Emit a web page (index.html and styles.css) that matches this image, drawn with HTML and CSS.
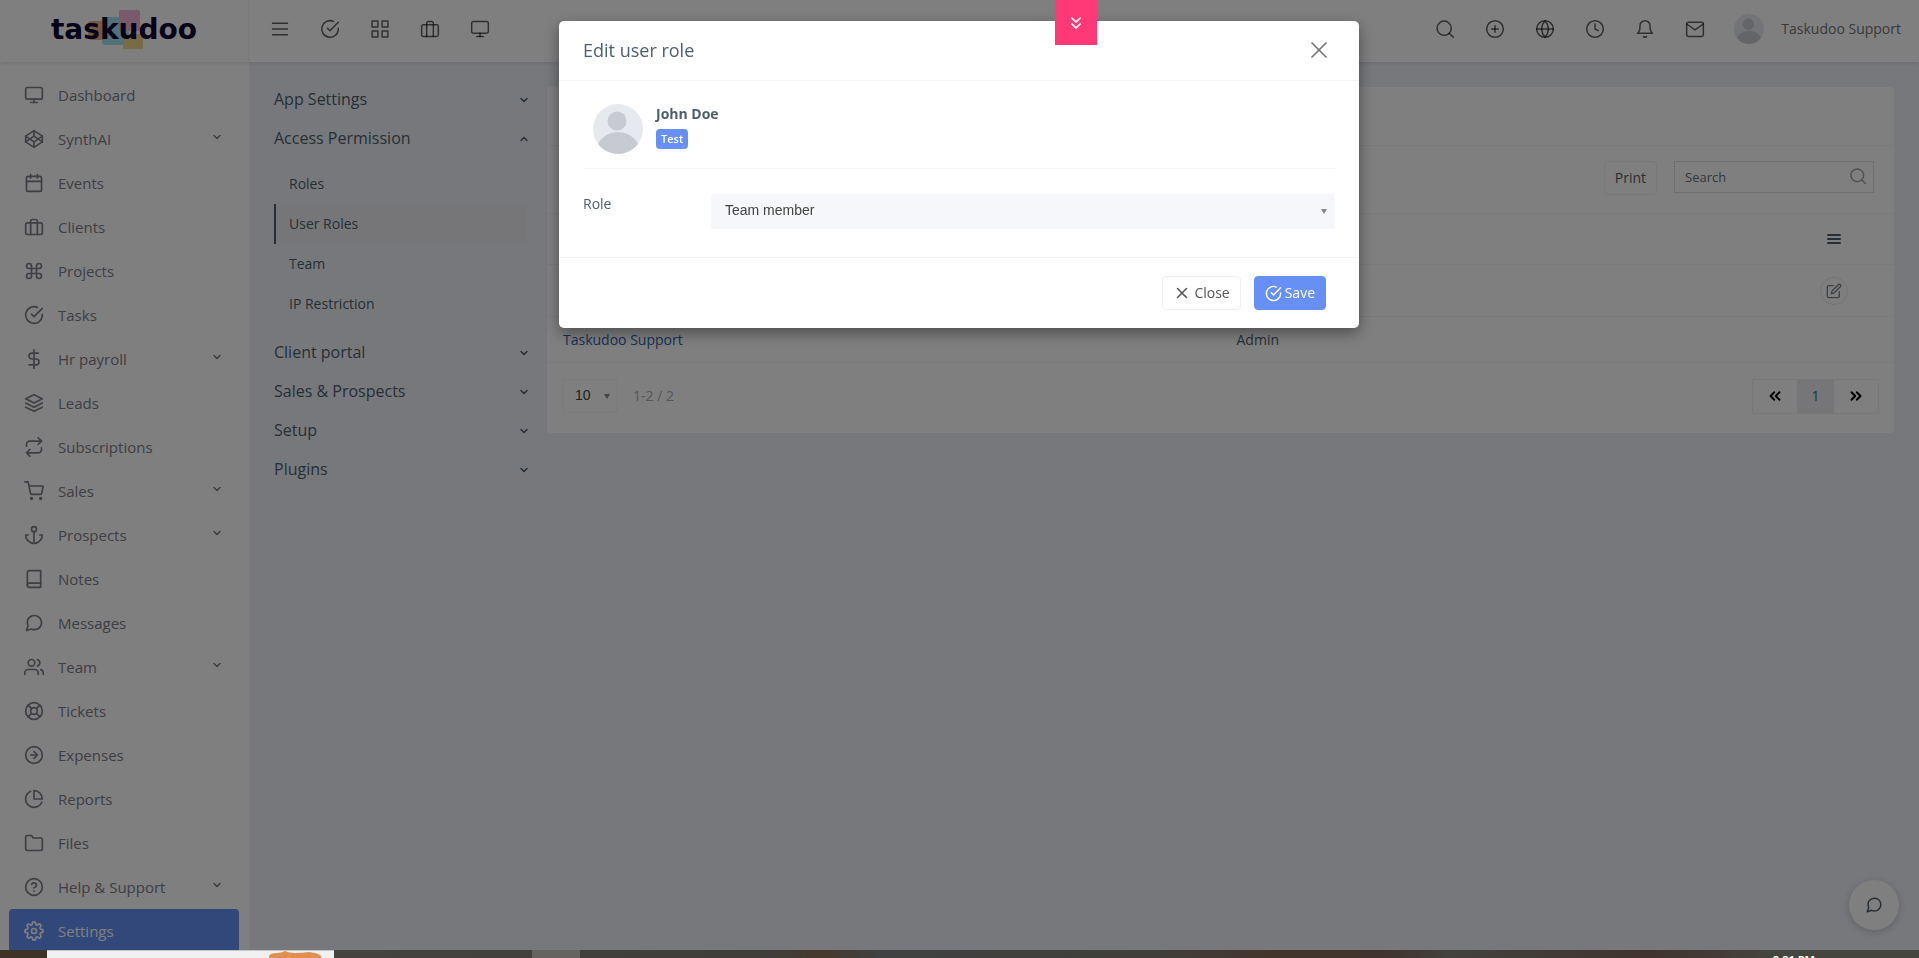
FILE: index.html
```html
<!DOCTYPE html>
<html lang="en">
<head>
    <meta charset="UTF-8">
    <meta name="viewport" content="width=device-width, initial-scale=1.0">
    <title>User roles | Taskudoo</title>
    <link rel="stylesheet" href="styles.css">
</head>
<body>

    <!-- icon set -->
    <svg class="icon-defs" aria-hidden="true">
        <symbol id="i-monitor" viewBox="0 0 24 24"><rect x="2" y="3" width="20" height="14" rx="2"/><path d="M8 21h8"/><path d="M12 17v4"/></symbol>
        <symbol id="i-codepen" viewBox="0 0 24 24"><path d="M12 2l10 6.500v7L12 22 2 15.500v-7z"/><path d="M12 22v-6.500"/><path d="M22 8.500l-10 7-10-7"/><path d="M2 15.500l10-7 10 7"/><path d="M12 2v6.500"/></symbol>
        <symbol id="i-calendar" viewBox="0 0 24 24"><rect x="3" y="4" width="18" height="18" rx="2"/><path d="M16 2v4"/><path d="M8 2v4"/><path d="M3 10h18"/></symbol>
        <symbol id="i-briefcase" viewBox="0 0 24 24"><rect x="2" y="7" width="20" height="14" rx="2"/><path d="M16 21V5a2 2 0 0 0-2-2h-4a2 2 0 0 0-2 2v16"/></symbol>
        <symbol id="i-command" viewBox="0 0 24 24"><path d="M18 3a3 3 0 0 0-3 3v12a3 3 0 1 0 3-3H6a3 3 0 1 0 3 3V6a3 3 0 1 0-3 3h12a3 3 0 0 0 0-6z"/></symbol>
        <symbol id="i-check-circle" viewBox="0 0 24 24"><path d="M22 11.080V12a10 10 0 1 1-5.930-9.140"/><path d="M22 4L12 14.010l-3-3"/></symbol>
        <symbol id="i-dollar" viewBox="0 0 24 24"><path d="M12 1v22"/><path d="M17 5H9.500a3.500 3.500 0 0 0 0 7h5a3.500 3.500 0 0 1 0 7H6"/></symbol>
        <symbol id="i-layers" viewBox="0 0 24 24"><path d="M12 2L2 7l10 5 10-5z"/><path d="M2 17l10 5 10-5"/><path d="M2 12l10 5 10-5"/></symbol>
        <symbol id="i-repeat" viewBox="0 0 24 24"><path d="M17 1l4 4-4 4"/><path d="M3 11V9a4 4 0 0 1 4-4h14"/><path d="M7 23l-4-4 4-4"/><path d="M21 13v2a4 4 0 0 1-4 4H3"/></symbol>
        <symbol id="i-cart" viewBox="0 0 24 24"><circle cx="9" cy="21" r="1"/><circle cx="20" cy="21" r="1"/><path d="M1 1h4l2.680 13.390a2 2 0 0 0 2 1.610h9.720a2 2 0 0 0 2-1.610L23 6H6"/></symbol>
        <symbol id="i-anchor" viewBox="0 0 24 24"><circle cx="12" cy="5" r="3"/><path d="M12 22V8"/><path d="M5 12H2a10 10 0 0 0 20 0h-3"/></symbol>
        <symbol id="i-book" viewBox="0 0 24 24"><path d="M4 19.500A2.500 2.500 0 0 1 6.500 17H20"/><path d="M6.500 2H20v20H6.500A2.500 2.500 0 0 1 4 19.500v-15A2.500 2.500 0 0 1 6.500 2z"/></symbol>
        <symbol id="i-message" viewBox="0 0 24 24"><path d="M21 11.500a8.380 8.380 0 0 1-.9 3.800 8.500 8.500 0 0 1-7.600 4.700 8.380 8.380 0 0 1-3.800-.9L3 21l1.900-5.700a8.380 8.380 0 0 1-.9-3.800 8.500 8.500 0 0 1 4.700-7.600 8.380 8.380 0 0 1 3.800-.9h.5a8.480 8.480 0 0 1 8 8v.5z"/></symbol>
        <symbol id="i-users" viewBox="0 0 24 24"><path d="M17 21v-2a4 4 0 0 0-4-4H5a4 4 0 0 0-4 4v2"/><circle cx="9" cy="7" r="4"/><path d="M23 21v-2a4 4 0 0 0-3-3.870"/><path d="M16 3.130a4 4 0 0 1 0 7.750"/></symbol>
        <symbol id="i-life-buoy" viewBox="0 0 24 24"><circle cx="12" cy="12" r="10"/><circle cx="12" cy="12" r="4"/><path d="M4.930 4.930l4.240 4.240"/><path d="M14.830 14.830l4.240 4.240"/><path d="M14.830 9.170l4.240-4.240"/><path d="M4.930 19.070l4.240-4.240"/></symbol>
        <symbol id="i-arrow-circle" viewBox="0 0 24 24"><circle cx="12" cy="12" r="10"/><path d="M12 16l4-4-4-4"/><path d="M8 12h8"/></symbol>
        <symbol id="i-pie" viewBox="0 0 24 24"><path d="M21.210 15.890A10 10 0 1 1 8 2.830"/><path d="M22 12A10 10 0 0 0 12 2v10z"/></symbol>
        <symbol id="i-folder" viewBox="0 0 24 24"><path d="M22 19a2 2 0 0 1-2 2H4a2 2 0 0 1-2-2V5a2 2 0 0 1 2-2h5l2 3h9a2 2 0 0 1 2 2z"/></symbol>
        <symbol id="i-help" viewBox="0 0 24 24"><circle cx="12" cy="12" r="10"/><path d="M9.090 9a3 3 0 0 1 5.830 1c0 2-3 3-3 3"/><path d="M12 17h.01"/></symbol>
        <symbol id="i-settings" viewBox="0 0 24 24"><circle cx="12" cy="12" r="3"/><path d="M19.400 15a1.650 1.650 0 0 0 .33 1.820l.06.06a2 2 0 0 1-2.830 2.830l-.06-.06a1.650 1.650 0 0 0-2.800 1.170V21a2 2 0 0 1-4 0v-.09A1.650 1.650 0 0 0 7.200 19.650l-.06.06a2 2 0 0 1-2.830-2.830l.06-.06A1.650 1.650 0 0 0 3.090 14H3a2 2 0 0 1 0-4h.09A1.650 1.650 0 0 0 4.350 7.200l-.06-.06a2 2 0 0 1 2.830-2.830l.06.06A1.650 1.650 0 0 0 10 3.090V3a2 2 0 0 1 4 0v.09a1.650 1.650 0 0 0 2.800 1.260l.06-.06a2 2 0 0 1 2.830 2.830l-.06.06A1.650 1.650 0 0 0 20.910 10H21a2 2 0 0 1 0 4h-.09a1.650 1.650 0 0 0-1.510 1z"/></symbol>
        <symbol id="i-menu" viewBox="0 0 24 24"><path d="M3 12h18"/><path d="M3 5h18"/><path d="M3 19h18"/></symbol>
        <symbol id="i-list" viewBox="0 0 24 24"><path d="M3 12h18"/><path d="M3 6h18"/><path d="M3 18h18"/></symbol>
        <symbol id="i-grid" viewBox="0 0 24 24"><rect x="2.500" y="2.500" width="7" height="7"/><rect x="14.500" y="2.500" width="7" height="7"/><rect x="14.500" y="14.500" width="7" height="7"/><rect x="2.500" y="14.500" width="7" height="7"/></symbol>
        <symbol id="i-search" viewBox="0 0 24 24"><circle cx="11" cy="11" r="8.500"/><path d="M22 22l-5-5"/></symbol>
        <symbol id="i-plus-circle" viewBox="0 0 24 24"><circle cx="12" cy="12" r="10"/><path d="M12 8v8"/><path d="M8 12h8"/></symbol>
        <symbol id="i-globe" viewBox="0 0 24 24"><circle cx="12" cy="12" r="10"/><path d="M2 12h20"/><path d="M12 2a15.300 15.300 0 0 1 4 10 15.300 15.300 0 0 1-4 10 15.300 15.300 0 0 1-4-10 15.300 15.300 0 0 1 4-10z"/></symbol>
        <symbol id="i-clock" viewBox="0 0 24 24"><circle cx="12" cy="12" r="10"/><path d="M12 6v6l4 2"/></symbol>
        <symbol id="i-bell" viewBox="0 0 24 24"><path d="M18 8A6 6 0 0 0 6 8c0 7-3 9-3 9h18s-3-2-3-9"/><path d="M13.730 21a2 2 0 0 1-3.460 0"/></symbol>
        <symbol id="i-mail" viewBox="0 0 24 24"><rect x="2" y="4" width="20" height="17" rx="2"/><path d="M22 6l-10 7L2 6"/></symbol>
        <symbol id="i-down" viewBox="0 0 24 24"><path d="M6 9l6 6 6-6"/></symbol>
        <symbol id="i-up" viewBox="0 0 24 24"><path d="M18 15l-6-6-6 6"/></symbol>
        <symbol id="i-x" viewBox="0 0 24 24"><path d="M18 6L6 18"/><path d="M6 6l12 12"/></symbol>
        <symbol id="i-edit" viewBox="0 0 24 24"><path d="M11 4H4a2 2 0 0 0-2 2v14a2 2 0 0 0 2 2h14a2 2 0 0 0 2-2v-7"/><path d="M18.500 2.500a2.120 2.120 0 0 1 3 3L12 15l-4 1 1-4z"/></symbol>
        <symbol id="i-first" viewBox="0 0 24 24"><path d="M11 17l-5-5 5-5"/><path d="M18 17l-5-5 5-5"/></symbol>
        <symbol id="i-last" viewBox="0 0 24 24"><path d="M13 17l5-5-5-5"/><path d="M6 17l5-5-5-5"/></symbol>
        <symbol id="i-chevrons-down" viewBox="0 0 24 24"><path d="M7 13l5 5 5-5"/><path d="M7 6l5 5 5-5"/></symbol>
        <symbol id="i-avatar" viewBox="0 0 50 50"><circle class="avatar-bg" cx="25" cy="25" r="25"/><circle class="avatar-fg" cx="24" cy="17" r="9.500"/><path class="avatar-fg" d="M5 40C9 32 17 28 25 28s16 4 20 12a25 25 0 0 1-40 0z"/></symbol>
    </svg>

    <div class="app">
        <header class="topbar">
            <a class="logo" href="#">
                <svg class="logo-blocks" viewBox="0 0 60 42" aria-hidden="true">
                    <rect x="14" y="8" width="27" height="28" rx="3" fill="#a5e3f0"/>
                    <rect x="0" y="12" width="18" height="19" rx="3" fill="#eeb083"/>
                    <rect x="31" y="1" width="21" height="21" rx="2" fill="#f3b4d6"/>
                    <rect x="35" y="25" width="20" height="15" rx="1" fill="#f2d591"/>
                </svg>
                <span class="logo-text">taskudoo</span>
            </a>
            <div class="topbar-main">
                <div class="topbar-icons">
                    <button type="button" aria-label="Toggle menu"><svg class="icon"><use href="#i-menu"/></svg></button>
                    <button type="button" aria-label="Tasks"><svg class="icon"><use href="#i-check-circle"/></svg></button>
                    <button type="button" aria-label="Projects"><svg class="icon"><use href="#i-grid"/></svg></button>
                    <button type="button" aria-label="Clients"><svg class="icon"><use href="#i-briefcase"/></svg></button>
                    <button type="button" aria-label="Dashboard"><svg class="icon"><use href="#i-monitor"/></svg></button>
                </div>
                <div class="topbar-icons">
                    <button type="button" aria-label="Search"><svg class="icon"><use href="#i-search"/></svg></button>
                    <button type="button" aria-label="Add"><svg class="icon"><use href="#i-plus-circle"/></svg></button>
                    <button type="button" aria-label="Language"><svg class="icon"><use href="#i-globe"/></svg></button>
                    <button type="button" aria-label="Clock"><svg class="icon"><use href="#i-clock"/></svg></button>
                    <button type="button" aria-label="Notifications"><svg class="icon"><use href="#i-bell"/></svg></button>
                    <button type="button" aria-label="Messages"><svg class="icon"><use href="#i-mail"/></svg></button>
                    <a class="user-link" href="#"><svg class="avatar avatar-sm"><use href="#i-avatar"/></svg>Taskudoo Support</a>
                </div>
            </div>
        </header>

        <nav class="sidebar">
            <a href="#"><svg class="icon"><use href="#i-monitor"/></svg><span>Dashboard</span></a>
            <a href="#"><svg class="icon"><use href="#i-codepen"/></svg><span>SynthAI</span><svg class="chev"><use href="#i-down"/></svg></a>
            <a href="#"><svg class="icon"><use href="#i-calendar"/></svg><span>Events</span></a>
            <a href="#"><svg class="icon"><use href="#i-briefcase"/></svg><span>Clients</span></a>
            <a href="#"><svg class="icon"><use href="#i-command"/></svg><span>Projects</span></a>
            <a href="#"><svg class="icon"><use href="#i-check-circle"/></svg><span>Tasks</span></a>
            <a href="#"><svg class="icon"><use href="#i-dollar"/></svg><span>Hr payroll</span><svg class="chev"><use href="#i-down"/></svg></a>
            <a href="#"><svg class="icon"><use href="#i-layers"/></svg><span>Leads</span></a>
            <a href="#"><svg class="icon"><use href="#i-repeat"/></svg><span>Subscriptions</span></a>
            <a href="#"><svg class="icon"><use href="#i-cart"/></svg><span>Sales</span><svg class="chev"><use href="#i-down"/></svg></a>
            <a href="#"><svg class="icon"><use href="#i-anchor"/></svg><span>Prospects</span><svg class="chev"><use href="#i-down"/></svg></a>
            <a href="#"><svg class="icon"><use href="#i-book"/></svg><span>Notes</span></a>
            <a href="#"><svg class="icon"><use href="#i-message"/></svg><span>Messages</span></a>
            <a href="#"><svg class="icon"><use href="#i-users"/></svg><span>Team</span><svg class="chev"><use href="#i-down"/></svg></a>
            <a href="#"><svg class="icon"><use href="#i-life-buoy"/></svg><span>Tickets</span></a>
            <a href="#"><svg class="icon"><use href="#i-arrow-circle"/></svg><span>Expenses</span></a>
            <a href="#"><svg class="icon"><use href="#i-pie"/></svg><span>Reports</span></a>
            <a href="#"><svg class="icon"><use href="#i-folder"/></svg><span>Files</span></a>
            <a href="#"><svg class="icon"><use href="#i-help"/></svg><span>Help &amp; Support</span><svg class="chev"><use href="#i-down"/></svg></a>
            <a class="active" href="#"><svg class="icon"><use href="#i-settings"/></svg><span>Settings</span></a>
        </nav>

        <main class="page">
            <nav class="settings-nav">
                <a class="group" href="#">App Settings<svg class="chev"><use href="#i-down"/></svg></a>
                <a class="group" href="#">Access Permission<svg class="chev"><use href="#i-up"/></svg></a>
                <div class="group-items">
                    <a href="#">Roles</a>
                    <a class="active" href="#">User Roles</a>
                    <a href="#">Team</a>
                    <a href="#">IP Restriction</a>
                </div>
                <a class="group" href="#">Client portal<svg class="chev"><use href="#i-down"/></svg></a>
                <a class="group" href="#">Sales &amp; Prospects<svg class="chev"><use href="#i-down"/></svg></a>
                <a class="group" href="#">Setup<svg class="chev"><use href="#i-down"/></svg></a>
                <a class="group" href="#">Plugins<svg class="chev"><use href="#i-down"/></svg></a>
            </nav>

            <section class="card">
                <div class="card-title"></div>
                <div class="card-tools">
                    <button class="btn" type="button">Print</button>
                    <div class="search-box">
                        <input type="search" placeholder="Search" aria-label="Search">
                        <svg class="icon"><use href="#i-search"/></svg>
                    </div>
                </div>
                <table>
                    <thead>
                        <tr><th class="col-user">User</th><th>Role</th><th class="col-option"><svg class="icon icon-list"><use href="#i-list"/></svg></th></tr>
                    </thead>
                    <tbody>
                        <tr class="row-tall"><td><a href="#">John Doe</a></td><td></td><td class="col-option"><button class="edit-btn" type="button" aria-label="Edit"><svg class="icon"><use href="#i-edit"/></svg></button></td></tr>
                        <tr><td><a href="#">Taskudoo Support</a></td><td>Admin</td><td></td></tr>
                    </tbody>
                </table>
                <div class="card-footer">
                    <div class="page-size">
                        <select aria-label="Rows per page"><option>10</option></select>
                    </div>
                    <span class="page-info">1-2 / 2</span>
                    <div class="pagination">
                        <button type="button" aria-label="Previous"><svg class="icon"><use href="#i-first"/></svg></button>
                        <button class="current" type="button">1</button>
                        <button type="button" aria-label="Next"><svg class="icon"><use href="#i-last"/></svg></button>
                    </div>
                </div>
            </section>
        </main>

        <button class="chat-btn" type="button" aria-label="Chat"><svg class="icon"><use href="#i-message"/></svg></button>
    </div>

    <div class="backdrop">
        <form class="modal">
            <div class="modal-header">
                <h4>Edit user role</h4>
                <button class="modal-x" type="button" aria-label="Close dialog"><svg class="icon"><use href="#i-x"/></svg></button>
            </div>
            <div class="modal-body">
                <div class="person">
                    <svg class="avatar"><use href="#i-avatar"/></svg>
                    <div>
                        <strong>John Doe</strong>
                        <span class="badge">Test</span>
                    </div>
                </div>
                <div class="form-row">
                    <label for="role">Role</label>
                    <div class="select-wrap">
                        <select id="role"><option>Team member</option><option>Admin</option></select>
                    </div>
                </div>
            </div>
            <div class="modal-footer">
                <button class="btn btn-close" type="button"><svg class="icon"><use href="#i-x"/></svg>Close</button>
                <button class="btn btn-save" type="submit"><svg class="icon"><use href="#i-check-circle"/></svg>Save</button>
            </div>
        </form>
    </div>

    <button class="pull-tab" type="button" aria-label="Expand"><svg class="icon"><use href="#i-chevrons-down"/></svg></button>

    <!-- desktop taskbar peeking in below the page -->
    <div class="taskbar">
        <div class="taskbar-panel">
            <svg viewBox="0 0 52 7" class="thumb" aria-hidden="true"><path d="M0 7V5q1-3 8-3 5 0 8-2 4 2 10 2 8 0 14-1 10 1 12 4v2z"/></svg>
        </div>
        <div class="taskbar-active"></div>
        <span class="clock">8:21 PM</span>
    </div>

</body>
</html>
```
FILE: styles.css
```css
:root {
    --text: #4e5e6a;
    --sidebar-text: #7c7c88;
    --primary: #6690f4;
    --line: #f2f4f6;
    --page-bg: #eff1f8;
    --taskbar-height: 8px;
}

* {
    box-sizing: border-box;
}

html, body {
    height: 100%;
    margin: 0;
    overflow: hidden;
}

body {
    font-family: "Open Sans", sans-serif;
    font-size: 14px;
    line-height: 20px;
    color: var(--text);
    background: var(--page-bg);
}

a {
    color: inherit;
    text-decoration: none;
}

button, input, select {
    font: inherit;
    color: inherit;
}

button {
    padding: 0;
    border: 0;
    background: none;
}

.icon-defs {
    position: absolute;
    width: 0;
    height: 0;
}

.icon, .chev {
    display: block;
    flex: none;
    width: 20px;
    height: 20px;
    fill: none;
    stroke: currentColor;
    stroke-width: 2px;
    stroke-linecap: round;
    stroke-linejoin: round;
}

.chev {
    width: 12px;
    height: 12px;
    stroke-width: 3px;
}

.avatar {
    display: block;
    flex: none;
    width: 50px;
    height: 50px;
}

.avatar-sm {
    width: 30px;
    height: 30px;
}

.avatar-bg {
    fill: #e6e9ee;
}

.avatar-fg {
    fill: #c7cbd1;
}

/* App shell */
.app {
    display: grid;
    grid-template-columns: 249px 1fr;
    grid-template-rows: 62px 1fr;
    height: 100vh;
}

.topbar {
    grid-column: 1 / 3;
    display: grid;
    grid-template-columns: 249px 1fr;
    background: #fff;
    box-shadow: 0 1px 4px rgba(0, 0, 0, 0.12);
    z-index: 1;
}

.logo {
    position: relative;
    display: flex;
    justify-content: center;
    align-items: center;
    border-right: 1px solid #f5f5f7;
}

.logo-blocks {
    position: absolute;
    left: 88px;
    top: 9px;
    width: 60px;
    height: 42px;
}

.logo-text {
    position: relative;
    padding-bottom: 3px;
    font-family: "DejaVu Sans", sans-serif;
    font-size: 28px;
    font-weight: 700;
    color: #0c0030;
}

.topbar-main {
    display: flex;
    justify-content: space-between;
    padding: 0 18px 4px 6px;
}

.topbar-icons {
    display: flex;
    align-items: center;
    color: rgba(0, 0, 0, 0.62);
}

.topbar-icons .icon {
    stroke-width: 1.8px;
}

.topbar-icons button {
    padding: 15px;
}

.user-link {
    display: flex;
    align-items: center;
    gap: 17px;
    padding-left: 14px;
    color: #6f7479;
}

/* Sidebar */
.sidebar {
    padding: 11px 10px 0 9px;
    background: #fff;
    color: var(--sidebar-text);
    font-size: 15px;
}

.sidebar a {
    display: flex;
    align-items: center;
    height: 44px;
    padding: 0 16px 0 15px;
    border-radius: 4px;
}

.sidebar span {
    flex: 1;
    padding-left: 14px;
}

.sidebar .active {
    background: var(--primary);
    color: #fff;
}

.sidebar .chev {
    margin-bottom: 5px;
}

/* Page */
.page {
    display: flex;
    align-items: flex-start;
    gap: 17px;
    padding: 17px 25px 0;
}

.settings-nav {
    flex: none;
    width: 256px;
}

.group {
    display: flex;
    align-items: center;
    justify-content: space-between;
    height: 39px;
    font-size: 16px;
}

.group .chev {
    margin-top: 2px;
}

.group-items {
    padding: 7px 3px 8px 0;
}

.group-items a {
    display: block;
    height: 40px;
    padding: 10px 13px;
    border-left: 2px solid transparent;
}

.group-items .active {
    border-color: var(--text);
    background: #ecedf1;
}

.card {
    flex: 1;
    margin-top: 8px;
    background: #fff;
    border-radius: 4px;
}

.card-title {
    height: 59px;
    border-bottom: 1px solid var(--line);
}

.card-tools {
    display: flex;
    justify-content: flex-end;
    align-items: flex-start;
    gap: 17px;
    height: 67px;
    padding: 15px 20px;
}

.btn {
    display: flex;
    align-items: center;
    height: 34px;
    padding: 0 10px;
    border: 1px solid #f0f0f2;
    border-radius: 4px;
    background: #fff;
}

.search-box {
    position: relative;
}

.search-box input {
    display: block;
    width: 200px;
    height: 32px;
    padding: 0 10px;
    border: 1px solid #dcdde6;
    border-radius: 0;
    background: #fff;
    font-size: 13px;
}

.search-box input::placeholder {
    color: #6a6f75;
}

.search-box .icon {
    position: absolute;
    top: 6px;
    right: 7px;
    width: 18px;
    height: 18px;
    color: #9fa5ab;
}

table {
    width: 100%;
    border-collapse: separate;
    border-spacing: 0;
}

th, td {
    height: 46px;
    padding: 0 16px;
    border-top: 1px solid var(--line);
    text-align: left;
}

th {
    height: 51px;
}

.row-tall td {
    height: 52px;
}

td a {
    color: #2c64a8;
}

.col-user {
    width: 50%;
}

.col-option {
    width: 120px;
}

.col-option .icon, .edit-btn {
    margin: 0 auto;
}

.icon-list {
    width: 16px;
    height: 16px;
    stroke-width: 3px;
}

.edit-btn {
    display: flex;
    align-items: center;
    width: 28px;
    height: 28px;
    border: 1px solid #e6e7ec;
    border-radius: 50%;
}

.edit-btn .icon {
    width: 16px;
    height: 16px;
    color: #7d8287;
}

.card-footer {
    display: flex;
    align-items: center;
    height: 71px;
    padding: 0 15px 4px;
    border-top: 1px solid var(--line);
}

.page-size, .select-wrap {
    position: relative;
}

.page-size select, .select-wrap select {
    display: block;
    width: 100%;
    appearance: none;
    border: 0;
    border-radius: 2px;
    font-family: "Liberation Sans", sans-serif;
}

.page-size::after, .select-wrap::after {
    content: "";
    position: absolute;
    top: 15px;
    right: 8px;
    border: 3px solid transparent;
    border-top: 5px solid #888;
    border-bottom: 0;
}

.page-size {
    width: 55px;
}

.page-size::after {
    right: 7px;
}

.page-size select {
    height: 34px;
    padding: 0 12px 3px;
    border: 1px solid #f7f7f9;
    background: #fff;
    color: #444;
}

.page-info {
    flex: 1;
    padding-left: 16px;
    color: #a9adb1;
}

.pagination {
    display: flex;
    border: 1px solid #f0f0f3;
    border-radius: 2px;
}

.pagination button {
    display: flex;
    align-items: center;
    justify-content: center;
    width: 44px;
    height: 33px;
    color: #000;
}

.pagination .icon {
    width: 18px;
    height: 18px;
    stroke-width: 2.5px;
}

.pagination .current {
    width: 37px;
    background: #ececf1;
    color: #2c64a8;
}

.chat-btn {
    position: fixed;
    right: 20px;
    bottom: 28px;
    display: flex;
    align-items: center;
    justify-content: center;
    width: 50px;
    height: 50px;
    border-radius: 50%;
    background: #fff;
    box-shadow: 0 2px 8px rgba(0, 0, 0, 0.2);
}

.chat-btn .icon {
    width: 18px;
    height: 18px;
}

/* Modal */
.backdrop {
    position: fixed;
    inset: 0 0 var(--taskbar-height);
    z-index: 10;
    display: flex;
    justify-content: center;
    align-items: flex-start;
    padding: 21px 1px 0 0;
    background: rgba(0, 0, 0, 0.5);
}

.modal {
    width: 100%;
    max-width: 800px;
    background: #fff;
    border-radius: 5px;
    box-shadow: 0 5px 15px rgba(0, 0, 0, 0.4);
}

.modal-header {
    display: flex;
    align-items: center;
    justify-content: space-between;
    height: 60px;
    padding: 0 26px 2px 24px;
    border-bottom: 1px solid var(--line);
}

.modal-header h4 {
    margin: 0;
    font-size: 18px;
    font-weight: 400;
}

.modal-x .icon {
    width: 28px;
    height: 28px;
    stroke-width: 1.5px;
    color: #777;
}

.modal-body {
    padding: 23px 24px 28px;
}

.person {
    display: flex;
    gap: 13px;
    padding: 0 10px 14px;
    border-bottom: 1px solid var(--line);
}

.person strong {
    display: block;
    font-weight: 700;
}

.badge {
    display: inline-block;
    margin-top: 5px;
    padding: 0 5px;
    border-radius: 4px;
    background: var(--primary);
    color: #fff;
    font-size: 11px;
    font-weight: 600;
}

.form-row {
    display: flex;
    padding-top: 25px;
}

.form-row label {
    width: 128px;
}

.select-wrap {
    flex: 1;
}

.select-wrap select {
    height: 35px;
    padding: 0 14px 3px;
    background: #f6f7fa;
    color: #444;
}

.modal-footer {
    display: flex;
    justify-content: flex-end;
    gap: 13px;
    padding: 18px 33px;
    border-top: 1px solid var(--line);
}

.btn-close {
    gap: 3px;
    color: #555;
}

.btn-close .icon {
    width: 18px;
    height: 18px;
}

.btn-save {
    gap: 3px;
    border-color: var(--primary);
    background: var(--primary);
    color: #fff;
}

.btn-save .icon {
    width: 17px;
    height: 17px;
}

.pull-tab {
    position: fixed;
    top: 0;
    left: 55%;
    z-index: 11;
    display: flex;
    align-items: center;
    justify-content: center;
    width: 42px;
    height: 45px;
    background: #ff3878;
    color: #fff;
}

/* Taskbar */
.taskbar {
    position: fixed;
    inset: auto 0 0;
    z-index: 12;
    display: flex;
    height: var(--taskbar-height);
    padding-left: 47px;
    overflow: hidden;
    background: linear-gradient(90deg, #3f3226 47px, #444340 334px, #3f3e3a 770px, #46392d 820px, #404142 880px, #403f3b 1160px, #43352c 1270px, #40352f 1390px, #42423f 1450px, #40342e 1650px, #454540 1780px);
}

.taskbar-panel {
    width: 287px;
    border-top: 1px solid #c4c4c4;
    background: #f1f1f1;
}

.thumb {
    display: block;
    width: 52px;
    height: 7px;
    margin-left: 222px;
    fill: #dd9050;
}

.taskbar-active {
    width: 48px;
    margin-left: 198px;
    background: #666461;
}

.clock {
    margin: 3px 104px 0 auto;
    color: #fff;
    font-size: 11px;
    font-weight: 700;
    line-height: 14px;
}
```
